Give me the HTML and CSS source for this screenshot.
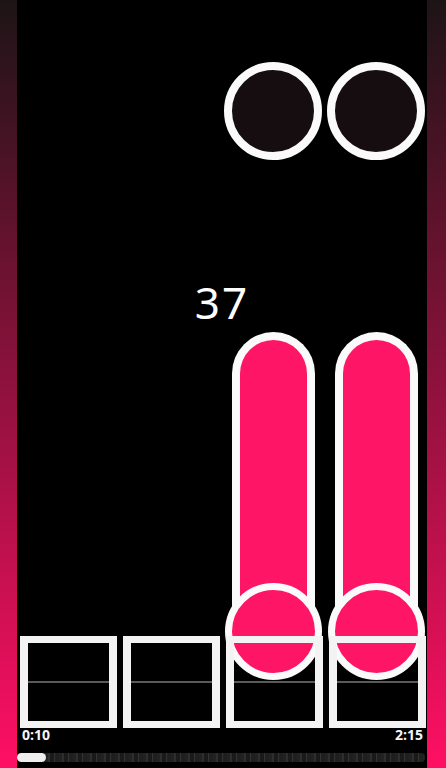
FILE: index.html
```html
<!DOCTYPE html>
<html lang="en">
<head>
<meta charset="utf-8">
<title>Playfield</title>
<link rel="stylesheet" href="styles.css">
</head>
<body>
<div class="screen">
  <div class="side side-left"></div>
  <div class="field">
    <div class="combo">37</div>
    <div class="lanes">
      <div class="lane">
        <div class="receptor"></div>
      </div>
      <div class="lane">
        <div class="receptor"></div>
      </div>
      <div class="lane">
        <div class="note note-top"></div>
        <div class="hold"></div>
        <div class="note note-head"></div>
        <div class="receptor"></div>
      </div>
      <div class="lane">
        <div class="note note-top"></div>
        <div class="hold"></div>
        <div class="note note-head"></div>
        <div class="receptor"></div>
      </div>
    </div>
    <div class="times">
      <span>0:10</span>
      <span>2:15</span>
    </div>
    <div class="progress">
      <div class="progress-fill"></div>
    </div>
  </div>
  <div class="side side-right"></div>
</div>
</body>
</html>
```
FILE: styles.css
```css
html, body {
  margin: 0;
  padding: 0;
  background: #000;
}

.screen {
  display: flex;
  width: 446px;
  height: 768px;
  overflow: hidden;
  background: #000;
}

.side {
  background: linear-gradient(to bottom, #1d1416 0%, #ff0f63 100%);
}

.side-left {
  width: 17px;
}

.side-right {
  width: 19px;
}

.field {
  position: relative;
  flex: 1;
  display: flex;
  flex-direction: column;
  background: #000;
}

.combo {
  position: absolute;
  top: 280px;
  left: 0;
  right: 0;
  text-align: center;
  font-family: "Noto Sans", "DejaVu Sans", sans-serif;
  font-size: 44px;
  line-height: 44px;
  color: #fff;
  letter-spacing: 2px;
  z-index: 5;
}

.lanes {
  flex: 1;
  display: grid;
  grid-template-columns: repeat(4, 97px);
  column-gap: 6px;
  padding: 0 1px 0 3px;
}

.lane {
  position: relative;
  display: flex;
  flex-direction: column;
  justify-content: flex-end;
}

.receptor {
  position: relative;
  z-index: 3;
  height: 92px;
  box-sizing: border-box;
  border: 7px solid #f3f3f3;
  border-left-width: 8px;
  border-right-width: 8px;
  background: linear-gradient(to bottom,
    transparent 0, transparent calc(50% - 1px),
    #5a5a5a calc(50% - 1px), #5a5a5a calc(50% + 1px),
    transparent calc(50% + 1px));
}

.note {
  position: absolute;
  box-sizing: border-box;
  border-radius: 50%;
}

.note-top {
  top: 62px;
  left: -2px;
  width: 98px;
  height: 98px;
  border: 8px solid #fafafa;
  background: #150d0f;
}

.hold {
  position: absolute;
  top: 332px;
  left: 6px;
  width: 83px;
  height: 310px;
  box-sizing: border-box;
  border: 8px solid #fafafa;
  border-bottom: none;
  border-radius: 42px 42px 0 0;
  background: #ff1566;
  z-index: 1;
}

.note-head {
  top: 583px;
  left: -1px;
  width: 97px;
  height: 97px;
  border: 7px solid #fafafa;
  background: #ff1566;
  z-index: 2;
}

.times {
  display: flex;
  justify-content: space-between;
  padding: 0 4px 0 5px;
  margin-top: 0;
  font-family: "Open Sans", "Liberation Sans", sans-serif;
  font-weight: 700;
  font-size: 14px;
  line-height: 14px;
  color: #f5f5f5;
}

.progress {
  margin: 11px 2px 6px 0;
  height: 9px;
  border-radius: 4px;
  background:
    repeating-linear-gradient(to right,
      #222 0, #222 3px,
      #2e2e2e 3px, #2e2e2e 5px,
      #1a1a1a 5px, #1a1a1a 9px,
      #333 9px, #333 10px,
      #1f1f1f 10px, #1f1f1f 14px);
  display: flex;
}

.progress-fill {
  width: 29px;
  height: 9px;
  border-radius: 5px;
  background: #eeeeee;
}
```
